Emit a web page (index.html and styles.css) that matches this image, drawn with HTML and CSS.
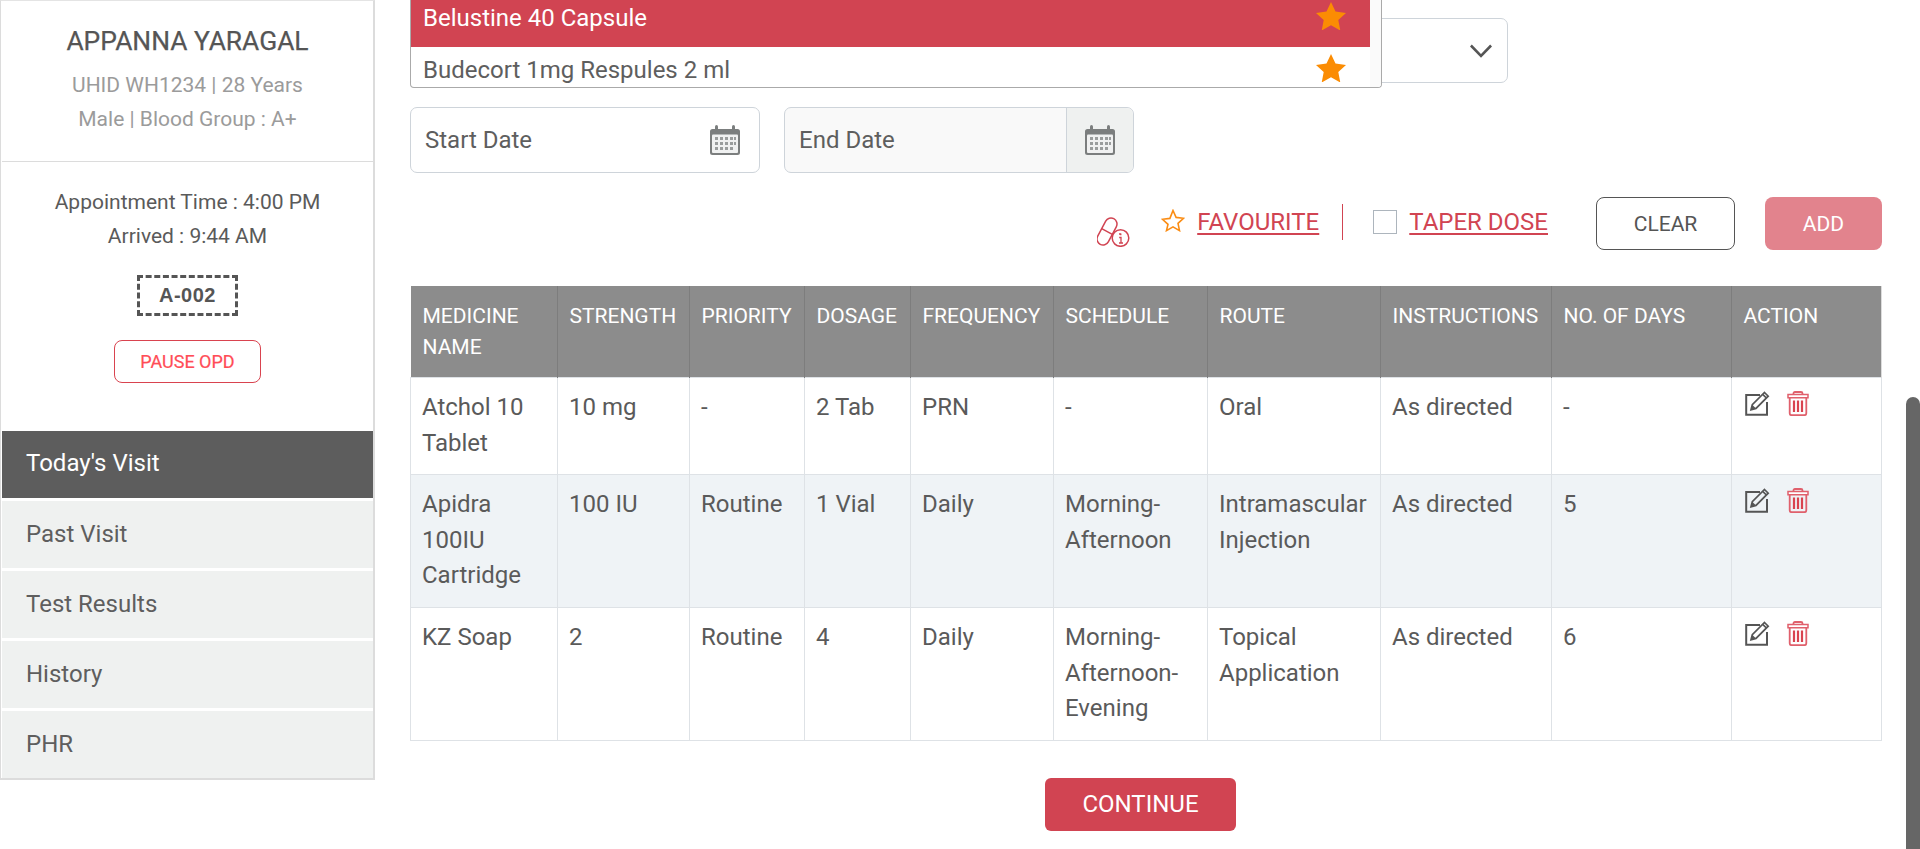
FILE: index.html
```html
<!DOCTYPE html>
<html lang="en">
<head>
<meta charset="utf-8">
<title>Prescription</title>
<link rel="stylesheet" href="styles.css">
</head>
<body>
<svg class="defs" width="0" height="0" aria-hidden="true">
  <defs>
    <symbol id="cal" viewBox="0 0 30 30">
      <path d="M0 6.500A2.500 2.500 0 0 1 2.500 4h25A2.500 2.500 0 0 1 30 6.500v21a2.500 2.500 0 0 1-2.500 2.500h-25A2.500 2.500 0 0 1 0 27.500z" fill="#7b7e7e"/>
      <rect x="2" y="9.500" width="26" height="18.500" rx="1" fill="#f0f1f1"/>
      <rect x="5" y="0" width="3" height="7" rx="1.500" fill="#7b7e7e"/>
      <rect x="22" y="0" width="3" height="7" rx="1.500" fill="#7b7e7e"/>
      <g fill="#9a9d9d">
        <rect x="5" y="12" width="3" height="3"/><rect x="10" y="12" width="3" height="3"/><rect x="15" y="12" width="3" height="3"/><rect x="20" y="12" width="3" height="3"/><rect x="24" y="12" width="2" height="3"/>
        <rect x="5" y="17" width="3" height="3"/><rect x="10" y="17" width="3" height="3"/><rect x="15" y="17" width="3" height="3"/><rect x="20" y="17" width="3" height="3"/><rect x="24" y="17" width="2" height="3"/>
        <rect x="5" y="22" width="3" height="3"/><rect x="10" y="22" width="3" height="3"/><rect x="15" y="22" width="3" height="3"/><rect x="20" y="22" width="3" height="3"/>
      </g>
    </symbol>
    <symbol id="edit" viewBox="0 0 25 25">
      <path d="M15 4H1.200v19.800H22V11" fill="none" stroke="#555" stroke-width="2"/>
      <path d="M19.500 1.500l3.700 3.700L11 17.400l-5 1.400 1.300-5.100zM17.700 3.300l3.700 3.700" fill="none" stroke="#555" stroke-width="1.700"/>
      <path d="M7.300 13.700l3.700 3.700-5 1.400z" fill="#555"/>
    </symbol>
    <symbol id="trash" viewBox="0 0 22 25">
      <path d="M6.500 4.500V2.500q0-1.500 1.500-1.500h6q1.500 0 1.500 1.500v2" fill="none" stroke="#e0606c" stroke-width="1.800"/>
      <path d="M1 3.500h20v3.300H1z" fill="#fff" stroke="#e0606c" stroke-width="1.500"/>
      <path d="M2.700 6.800v15.400q0 2 2 2h12.600q2 0 2-2V6.800" fill="none" stroke="#e0606c" stroke-width="1.800"/>
      <path d="M7 9.500v11.500M11 9.500v11.500M15 9.500v11.500" fill="none" stroke="#d9434f" stroke-width="2.200"/>
    </symbol>
    <symbol id="star" viewBox="0 0 30 28">
      <path d="M15 0l4.500 9.600 10.500 1.300-7.700 7.200 2 10.400L15 23.300 5.700 28.500l2-10.400L0 10.900l10.500-1.300z"/>
    </symbol>
  </defs>
</svg>

<div class="page">
  <aside class="sidebar">
    <section class="patient">
      <h1 class="patient-name">APPANNA YARAGAL</h1>
      <p class="patient-meta">UHID WH1234 | 28 Years</p>
      <p class="patient-meta">Male | Blood Group : A+</p>
    </section>
    <section class="appointment">
      <p class="appointment-line">Appointment Time : 4:00 PM</p>
      <p class="appointment-line">Arrived : 9:44 AM</p>
      <div class="token">A-002</div>
      <button class="pause-btn" type="button">PAUSE OPD</button>
    </section>
    <nav class="nav">
      <a class="nav-item nav-item-active">Today's Visit</a>
      <a class="nav-item">Past Visit</a>
      <a class="nav-item">Test Results</a>
      <a class="nav-item">History</a>
      <a class="nav-item">PHR</a>
    </nav>
  </aside>

  <main class="main">
    <div class="dropdown">
      <div class="dropdown-list">
        <div class="dropdown-row dropdown-row-active">
          <span>Belustine 40 Capsule</span>
          <svg class="dropdown-star"><use href="#star"/></svg>
        </div>
        <div class="dropdown-row">
          <span>Budecort 1mg Respules 2 ml</span>
          <svg class="dropdown-star"><use href="#star"/></svg>
        </div>
      </div>
      <div class="dropdown-track"></div>
    </div>

    <div class="select-box">
      <svg class="chevron" viewBox="0 0 22 14"><path d="M0.900 1.500L11 11.800 21.100 1.500" fill="none" stroke="#555" stroke-width="2.600"/></svg>
    </div>

    <div class="date-row">
      <div class="date-field">
        <span class="date-label">Start Date</span>
        <svg class="cal-icon"><use href="#cal"/></svg>
      </div>
      <div class="date-field date-field-disabled">
        <span class="date-label">End Date</span>
        <span class="date-addon"><svg class="cal-icon"><use href="#cal"/></svg></span>
      </div>
    </div>

    <div class="action-row">
      <svg class="pill-icon" viewBox="0 0 33 30">
        <g fill="none" stroke="#d14452" stroke-width="1.500">
          <rect x="4" y="0" width="12" height="29" rx="6" transform="rotate(28 10 14.500)"/>
          <path d="M4.700 11.700l10.600 5.600"/>
          <circle cx="23.500" cy="21" r="8.300" fill="#fff"/>
        </g>
        <path d="M22 17h2.300M23.800 17v1.200M22.200 20.500h1.800v5.500M22 26h4" fill="none" stroke="#d14452" stroke-width="1.300"/>
      </svg>
      <span class="fav">
        <svg class="fav-star" viewBox="0 0 24 23"><path d="M12 1.500l3.100 6.900 7.400.9-5.500 5 1.500 7.300-6.500-3.700-6.500 3.700L7 15.300l-5.500-5 7.400-.9z" fill="none" stroke="#fb8c13" stroke-width="1.600"/></svg>
        <a class="link">FAVOURITE</a>
      </span>
      <span class="action-divider"></span>
      <span class="taper">
        <span class="checkbox"></span>
        <a class="link">TAPER DOSE</a>
      </span>
      <button class="btn btn-clear" type="button">CLEAR</button>
      <button class="btn btn-add" type="button">ADD</button>
    </div>

    <table class="rx-table">
      <colgroup>
        <col class="c1"><col class="c2"><col class="c3"><col class="c4"><col class="c5"><col class="c6"><col class="c7"><col class="c8"><col class="c9"><col class="c10">
      </colgroup>
      <thead>
        <tr>
          <th>MEDICINE NAME</th><th>STRENGTH</th><th>PRIORITY</th><th>DOSAGE</th><th>FREQUENCY</th><th>SCHEDULE</th><th>ROUTE</th><th>INSTRUCTIONS</th><th>NO. OF DAYS</th><th>ACTION</th>
        </tr>
      </thead>
      <tbody>
        <tr>
          <td>Atchol 10 Tablet</td><td>10 mg</td><td>-</td><td>2 Tab</td><td>PRN</td><td>-</td><td>Oral</td><td>As directed</td><td>-</td>
          <td><span class="row-actions"><svg class="edit-icon"><use href="#edit"/></svg><svg class="trash-icon"><use href="#trash"/></svg></span></td>
        </tr>
        <tr class="row-alt">
          <td>Apidra 100IU Cartridge</td><td>100 IU</td><td>Routine</td><td>1 Vial</td><td>Daily</td><td>Morning-Afternoon</td><td>Intramascular Injection</td><td>As directed</td><td>5</td>
          <td><span class="row-actions"><svg class="edit-icon"><use href="#edit"/></svg><svg class="trash-icon"><use href="#trash"/></svg></span></td>
        </tr>
        <tr>
          <td>KZ Soap</td><td>2</td><td>Routine</td><td>4</td><td>Daily</td><td>Morning-Afternoon-Evening</td><td>Topical Application</td><td>As directed</td><td>6</td>
          <td><span class="row-actions"><svg class="edit-icon"><use href="#edit"/></svg><svg class="trash-icon"><use href="#trash"/></svg></span></td>
        </tr>
      </tbody>
    </table>

    <div class="continue-row">
      <button class="btn-continue" type="button">CONTINUE</button>
    </div>
  </main>
</div>
<div class="scroll-thumb"></div>
</body>
</html>
```

FILE: styles.css
```css
* { box-sizing: border-box; }
html, body { margin: 0; height: 100%; overflow: hidden; background: #fff; }
body { font-family: Roboto, "Liberation Sans", sans-serif; color: #555; }
p, h1 { margin: 0; }
.defs { position: absolute; }

.page { display: flex; align-items: flex-start; }

/* Sidebar */
.sidebar {
  width: 375px;
  height: 780px;
  flex: none;
  border: 1px solid #dcdcdc;
  border-top-color: #e4e4e4;
  border-right-width: 2px;
  border-bottom-width: 2px;
  padding-left: 1px;
  display: flex;
  flex-direction: column;
}
.patient { height: 161px; border-bottom: 1px solid #dcdcdc; padding-top: 22px; text-align: center; }
.patient-name { font-size: 26.400px; font-weight: 400; -webkit-text-stroke: 0.25px #555; line-height: 36px; color: #555; margin-bottom: 9px; }
.patient-meta { font-size: 21px; line-height: 34px; color: #9b9b9b; }
.appointment { height: 269px; padding-top: 23px; text-align: center; display: flex; flex-direction: column; align-items: center; }
.appointment-line { font-size: 21px; line-height: 34px; color: #5a5a5a; }
.token {
  width: 101px; height: 41px; margin-top: 22px;
  border: 3px dashed #555;
  font-family: "Liberation Sans", Arial, sans-serif;
  font-size: 20px; font-weight: 700; line-height: 35px; letter-spacing: 0.5px; color: #555;
}
.pause-btn {
  width: 147px; height: 43px; margin-top: 24px;
  background: #fff; border: 1px solid #d9434f; border-radius: 8px;
  font-family: inherit; font-size: 18px; font-weight: 400; -webkit-text-stroke: 0.2px #ff4d57; color: #ff4d57; padding: 0;
}
.nav { display: flex; flex-direction: column; gap: 3px; }
.nav-item {
  height: 67px; padding-left: 24px; display: flex; align-items: center;
  background: #eff1f0; color: #5e5e5e; font-size: 24px;
  padding-bottom: 2px;
}
.nav-item-active { background: #5d5d5d; color: #fff; padding-bottom: 4px; }

/* Main */
.main { width: 1507px; padding: 18px 0 0 35px; position: relative; }

.dropdown {
  position: absolute; left: 35px; top: -2px;
  width: 972px; height: 90px;
  display: flex;
  background: #fff;
  border: 1px solid #aaa; border-top: 0;
  border-radius: 0 0 4px 4px;
  overflow: hidden;
  z-index: 2;
}
.dropdown-list { flex: 1; }
.dropdown-track { width: 11px; background: #fafafa; }
.dropdown-row {
  height: 40px; padding: 6px 24px 0 12px;
  display: flex; align-items: center; justify-content: space-between;
  font-size: 24px; color: #5e5e5e;
}
.dropdown-row-active { height: 49px; padding-top: 0; padding-bottom: 9px; background: #d14452; color: #fff; }
.dropdown-star { width: 30px; height: 28px; fill: #fb8c03; margin-top: -4px; }

.select-box {
  width: 1098px; height: 65px;
  border: 1px solid #ced4da; border-radius: 7px;
  display: flex; align-items: center; justify-content: flex-end;
  padding-right: 15px;
}
.chevron { width: 22px; height: 14px; }

.date-row { display: flex; gap: 24px; margin-top: 24px; }
.date-field {
  width: 350px; height: 66px;
  border: 1px solid #ced4da; border-radius: 7px;
  display: flex; align-items: center; justify-content: space-between;
  padding: 0 19px 0 14px;
}
.date-field-disabled { background: #f9f9f9; padding-right: 0; }
.date-label { font-size: 24px; color: #5e5e5e; }
.cal-icon { width: 30px; height: 30px; display: block; }
.date-addon {
  width: 67px; height: 100%;
  display: flex; align-items: center; justify-content: center;
  background: #eff1f0; border-left: 1px solid #ced4da;
  border-radius: 0 7px 7px 0;
}

.action-row { display: flex; align-items: center; justify-content: flex-end; margin-top: 24px; height: 53px; width: 1472px; }
.pill-icon { width: 33px; height: 30px; margin-right: 31px; margin-top: 17px; }
.fav { display: flex; align-items: center; gap: 12px; margin-top: -3px; }
.fav-star { width: 24px; height: 23px; margin-top: -3px; }
.link { font-size: 24px; color: #d14452; text-decoration: underline; text-underline-offset: 3px; text-decoration-thickness: 2px; }
.action-divider { width: 1px; height: 36px; background: #d14452; margin: -4px 30px 0 23px; }
.taper { display: flex; align-items: center; gap: 12px; margin-top: -3px; }
.checkbox { width: 24px; height: 24px; border: 1px solid #adb5bd; background: #fff; }
.btn { height: 53px; border-radius: 8px; font-family: inherit; font-size: 21px; padding: 0; }
.btn-clear { width: 139px; margin-left: 48px; background: #fff; border: 1px solid #555; color: #555; }
.btn-add { width: 117px; margin-left: 30px; background: #e2838d; border: 0; color: #fff; }

.rx-table { margin-top: 36px; width: 1471px; table-layout: fixed; border-collapse: collapse; font-size: 24px; line-height: 35.600px; color: #5a5a5a; }
.c1 { width: 147px; } .c2 { width: 132px; } .c3 { width: 115px; } .c4 { width: 106px; } .c5 { width: 143px; }
.c6 { width: 154px; } .c7 { width: 173px; } .c8 { width: 171px; } .c9 { width: 180px; } .c10 { width: 150px; }
.rx-table th {
  background: #8c8c8c; color: #fff; font-size: 21px; font-weight: 400; line-height: 31px;
  text-align: left; vertical-align: top; padding: 15px 4px 14px 11.500px;
  border: 1px solid #7d7d7d; border-top: 0; border-bottom: 0;
  height: 91px;
}
.rx-table th:first-child { border-left: 0; padding-left: 12px; }
.rx-table th:last-child { border-right-color: #dcdcdc; }
.rx-table td { padding: 12px 6px 13px 11px; vertical-align: top; border: 1px solid #dee2e6; }
.row-alt td { background: #eff3f6; }
.row-actions { display: flex; gap: 17px; padding: 1px 0 0 2px; }
.edit-icon { width: 25px; height: 25px; }
.trash-icon { width: 22px; height: 25px; }

.continue-row { width: 1461px; margin-top: 37px; display: flex; justify-content: center; }
.btn-continue { width: 191px; height: 53px; background: #d14452; border: 0; border-radius: 6px; color: #fff; font-family: inherit; font-size: 24px; font-weight: 400; padding: 0; }

.scroll-thumb { position: fixed; right: 0; top: 397px; bottom: 0; width: 14px; background: #666; border-radius: 7px 7px 0 0; }
```
